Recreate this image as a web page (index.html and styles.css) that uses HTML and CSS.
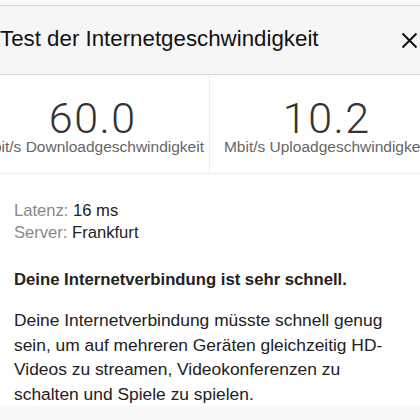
FILE: index.html
```html
<!DOCTYPE html>
<html lang="de">
<head>
    <meta charset="UTF-8">
    <meta name="viewport" content="width=device-width, initial-scale=1.0">
    <title>Test der Internetgeschwindigkeit</title>
    <link rel="stylesheet" href="styles.css">
</head>

<body>
    <div class="panel">
        <div class="header">
            <h1 class="title">Test der Internetgeschwindigkeit</h1>
            <button class="close" aria-label="Schließen">
                <svg width="17" height="17" viewBox="0 0 17 17">
                    <path d="M1.5 1.5 L15.5 15.5 M15.5 1.5 L1.5 15.5" stroke="#111" stroke-width="2" fill="none"/>
                </svg>
            </button>
        </div>

        <div class="stats">
            <div class="stat">
                <div class="stat-value">60.0</div>
                <div class="stat-label">Mbit/s Downloadgeschwindigkeit</div>
            </div>
            <div class="stat">
                <div class="stat-value">10.2</div>
                <div class="stat-label">Mbit/s Uploadgeschwindigkeit</div>
            </div>
        </div>

        <div class="details">
            <p class="info"><span class="info-key">Latenz:</span> 16 ms</p>
            <p class="info"><span class="info-key">Server:</span> Frankfurt</p>

            <p class="verdict">Deine Internetverbindung ist sehr schnell.</p>

            <p class="description">Deine Internetverbindung müsste schnell genug sein, um auf mehreren Geräten gleichzeitig HD-Videos zu streamen, Videokonferenzen zu schalten und Spiele zu spielen.</p>
        </div>
    </div>
</body>
</html>
```

FILE: styles.css
```css
body {
    font-family: "Liberation Sans", Arial, sans-serif;
    background-color: #f8f8f8;
    margin: 0;
    padding: 0;
    overflow: hidden;
}

.panel {
    width: 467px;
    margin-left: -25px;
    margin-top: 5px;
    background-color: #fff;
}

.header {
    display: flex;
    align-items: center;
    justify-content: space-between;
    height: 70px;
    padding: 0 24px 3px 25px;
    box-sizing: border-box;
    background-color: #f6f6f6;
    border-top: 1px solid #d8d8d8;
    border-bottom: 1px solid #d8d8d8;
}

.title {
    margin: 0;
    font-size: 22.3px;
    font-weight: normal;
    color: #111;
}

.close {
    border: none;
    background: none;
    padding: 0;
    margin-top: 3px;
    display: flex;
}

.stats {
    display: flex;
    border-bottom: 1px solid #ececec;
}

.stat {
    width: 234px;
    padding: 23px 0 17px;
    text-align: center;
}

.stat + .stat {
    width: 232px;
    border-left: 1px solid #ececec;
}

.stat-value {
    font-family: Roboto, "Liberation Sans", sans-serif;
    font-weight: 300;
    font-size: 43px;
    letter-spacing: 1.5px;
    text-indent: 1.5px;
    line-height: 40px;
    color: #333;
}

.stat-label {
    font-size: 15.5px;
    line-height: 18px;
    color: #666;
    white-space: nowrap;
}

.details {
    padding: 26px 0 0 39px;
    width: 378px;
}

.info {
    margin: 0;
    font-size: 16.6px;
    line-height: 22px;
    color: #222;
}

.info-key {
    color: #888;
}

.verdict {
    margin: 25px 0 0;
    font-size: 16.7px;
    line-height: 22px;
    font-weight: bold;
    color: #222;
}

.description {
    margin: 17px 0 0;
    font-size: 17.4px;
    line-height: 24.5px;
    color: #222;
}
```
